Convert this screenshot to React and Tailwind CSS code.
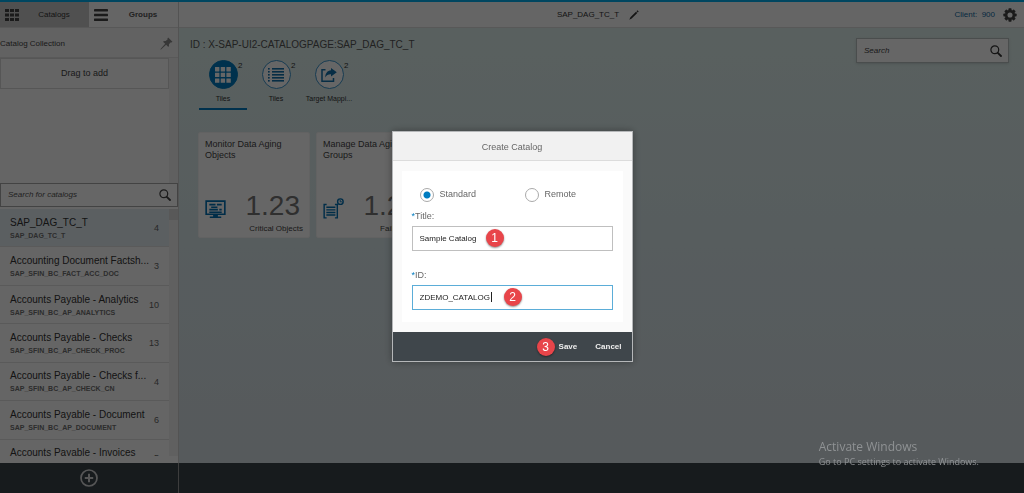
import { useState } from "react";

const catalogs = [
  { title: "SAP_DAG_TC_T", id: "SAP_DAG_TC_T", count: 4 },
  { title: "Accounting Document Factsh...", id: "SAP_SFIN_BC_FACT_ACC_DOC", count: 3 },
  { title: "Accounts Payable - Analytics", id: "SAP_SFIN_BC_AP_ANALYTICS", count: 10 },
  { title: "Accounts Payable - Checks", id: "SAP_SFIN_BC_AP_CHECK_PROC", count: 13 },
  { title: "Accounts Payable - Checks f...", id: "SAP_SFIN_BC_AP_CHECK_CN", count: 4 },
  { title: "Accounts Payable - Document", id: "SAP_SFIN_BC_AP_DOCUMENT", count: 6 },
  { title: "Accounts Payable - Invoices", id: "SAP_SFIN_BC_AP_INVOICES", count: 5 },
];

function GridIcon({ className }) {
  return (
    <svg viewBox="0 0 14 12" className={className} fill="currentColor" aria-hidden="true">
      {[0, 5, 10].map((x) =>
        [0, 4.5, 9].map((y) => <rect key={`${x}-${y}`} x={x} y={y} width="4" height="3" />)
      )}
    </svg>
  );
}

function TilesIcon({ className }) {
  return (
    <svg viewBox="0 0 16 16" className={className} fill="currentColor" aria-hidden="true">
      {[0, 5.7, 11.4].map((x) =>
        [0, 5.7, 11.4].map((y) => <rect key={`${x}-${y}`} x={x} y={y} width="4.400" height="4.400" rx=".3" />)
      )}
    </svg>
  );
}

function MenuIcon({ className }) {
  return (
    <svg viewBox="0 0 14 12" className={className} fill="currentColor" aria-hidden="true">
      <rect y="0" width="14" height="2.4" rx=".4" />
      <rect y="4.8" width="14" height="2.4" rx=".4" />
      <rect y="9.6" width="14" height="2.4" rx=".4" />
    </svg>
  );
}

function PinIcon({ className }) {
  return (
    <svg viewBox="0 0 14 14" className={className} fill="currentColor" aria-hidden="true">
      <path d="M8.800 .6 13.400 5.200 12.500 6 11.700 5.700 9.600 7.900C9.900 9 9.700 10 9 10.800L6.600 8.400 1.400 13.200 .4 13.600 .8 12.600 5.600 7.400 3.200 5C4 4.300 5 4.100 6.100 4.400L8.300 2.300 8 1.500Z" />
    </svg>
  );
}

function SearchIcon({ className }) {
  return (
    <svg viewBox="0 0 12 12" className={className} fill="none" stroke="currentColor" aria-hidden="true">
      <circle cx="4.800" cy="4.800" r="3.900" strokeWidth="1.200" />
      <path d="M7.800 7.800 11 11" strokeWidth="1.800" strokeLinecap="round" />
    </svg>
  );
}

function PencilIcon({ className }) {
  return (
    <svg viewBox="0 0 10 10" className={className} fill="currentColor" aria-hidden="true">
      <path d="M8.300 .3 9.700 1.600 8.800 2.500 7.500 1.200ZM7 1.700 8.300 3 2.700 8.500 .3 9.700 1.400 7.200Z" />
    </svg>
  );
}

function GearIcon({ className }) {
  return (
    <svg viewBox="0 0 16 16" className={className} aria-hidden="true">
      <g fill="currentColor">
        {[0, 45, 90, 135].map((a) => (
          <rect key={a} x="6.200" y="0.400" width="3.600" height="15.200" rx=".8" transform={`rotate(${a} 8 8)`} />
        ))}
      </g>
      <circle cx="8" cy="8" r="4.300" fill="none" stroke="currentColor" strokeWidth="3" />
      <circle cx="8" cy="8" r="2.900" fill="#fff" />
    </svg>
  );
}

function ListIcon({ className }) {
  return (
    <svg viewBox="0 0 16 14" className={className} fill="currentColor" aria-hidden="true">
      {[0, 3, 6, 9, 12].map((y) => (
        <g key={y}>
          <rect x="0" y={y} width="1.700" height="1.600" />
          <rect x="4" y={y} width="12" height="1.600" />
        </g>
      ))}
    </svg>
  );
}

function ShareIcon({ className }) {
  return (
    <svg viewBox="0 0 16 14" className={className} aria-hidden="true">
      <path d="M4.500 1.700H1V13.200H12.500V10" fill="none" stroke="currentColor" strokeWidth="1.500" />
      <path d="M10 0 15.800 4.300 10 8.600V6.300C7.400 6.200 5.500 7 4.200 9.500 4.400 5.300 6.300 2.600 10 2.300Z" fill="currentColor" />
    </svg>
  );
}

function MonitorIcon({ className }) {
  return (
    <svg viewBox="0 0 22 20" className={className} fill="currentColor" aria-hidden="true">
      <path d="M1.200 1.200H20.800V15H1.200Z" fill="none" stroke="currentColor" strokeWidth="1.700" />
      <path d="M4.500 4h6.500v1.700H4.500zM12.500 4H17.500v1.700h-5zM6.500 6.700h6.500v1.700H6.500zM4.500 9.300h9v1.700H4.500zM15 9.300H17.500v1.700h-2.500zM4.500 12h13v1.500H4.500zM8.500 15.500h5v2h-5zM5 17.200h12v1.700H5z" />
    </svg>
  );
}

function ScheduleIcon({ className }) {
  return (
    <svg viewBox="0 0 22 22" className={className} aria-hidden="true">
      <g fill="none" stroke="currentColor" strokeWidth="1.500">
        <path d="M3.800 6.800H1.200V20.800H3.800M12.500 6.800H15V20.800H12.500" />
        <circle cx="18.200" cy="3.800" r="2.900" />
        <path d="M18 2V4H19.800" strokeWidth="1" />
      </g>
      <path d="M3.500 9h9.500v1.500H3.500zM3.500 11.700h9.500v1.500H3.500zM3.500 14.400h9.500v1.500H3.500zM3.500 17.100h9.500v1.500H3.500z" fill="currentColor" />
    </svg>
  );
}

function PlusIcon({ className }) {
  return (
    <svg viewBox="0 0 18 18" className={className} fill="none" stroke="currentColor" aria-hidden="true">
      <circle cx="9" cy="9" r="8" strokeWidth="1.700" />
      <path d="M9 4.800V13.200M4.800 9H13.200" strokeWidth="2" />
    </svg>
  );
}

function Sidebar() {
  return (
    <aside className="flex w-[179px] shrink-0 flex-col border-r border-[#d0d0d0] bg-[#fcfcfc]">
      <nav className="flex h-[26px] shrink-0 border-b border-[#dcdcdc] text-[8px] font-bold text-[#555]">
        <button className="flex flex-1 items-center bg-[#c9c9c9] pl-[5px]">
          <GridIcon className="w-[14px] text-[#444]" />
          <span className="flex-1 font-normal text-[#333]">Catalogs</span>
        </button>
        <button className="flex flex-1 items-center pl-[5px]">
          <MenuIcon className="w-[14px] text-[#444]" />
          <span className="flex-1">Groups</span>
        </button>
      </nav>
      <div className="flex h-[30px] shrink-0 items-center justify-between border-b border-[#dedede] bg-[#f5f5f5] pt-[2px] pr-[5px]">
        <h2 className="text-[8px] text-[#444]">Catalog Collection</h2>
        <button aria-label="Pin panel">
          <PinIcon className="w-[13px] text-[#8a8a8a]" />
        </button>
      </div>
      <div className="flex min-h-0 flex-1 bg-[#f1f1f1]">
        <div className="w-[169px] bg-[#fcfcfc]">
          <button className="h-[31px] w-full border border-[#d6d6d6] text-[9px] text-[#444]">Drag to add</button>
        </div>
      </div>
      <label className="mb-[2px] flex h-6 shrink-0 items-center border border-[#a9a9a9] bg-white pr-[6px] pl-[7px]">
        <input
          type="text"
          aria-label="Search for catalogs"
          placeholder="Search for catalogs"
          className="min-w-0 flex-1 text-[8px] italic outline-none placeholder:text-[#555]"
        />
        <SearchIcon className="w-3 text-[#444]" />
      </label>
      <div className="mb-[7px] flex h-[247px] shrink-0 overflow-hidden">
        <ul className="flex h-[269px] w-[169px] flex-col">
          {catalogs.map((c, i) => (
            <li key={c.title} className="min-h-0 flex-1">
              <button
                className={`flex h-full w-full items-center border-b border-[#e0e0e0] px-[10px] pt-[2px] text-left ${
                  i === 0 ? "bg-[#e3edf3]" : ""
                }`}
              >
                <span className="flex-1 whitespace-nowrap">
                  <span className="block text-[10px] leading-[13px] text-[#333]">{c.title}</span>
                  <span className="block text-[7px] leading-[13px] font-bold text-[#707070]">{c.id}</span>
                </span>
                <span className="text-[9px] text-[#666]">{c.count}</span>
              </button>
            </li>
          ))}
        </ul>
        <div className="flex-1 bg-[#f1f1f1]">
          <div className="h-[11px] bg-[#dcdcdc]" />
        </div>
      </div>
    </aside>
  );
}

function TabFilter({ label, active, children }) {
  return (
    <button
      className={`flex h-[50px] w-12 flex-col items-center border-b-2 text-[7px] text-[#333] ${
        active ? "border-[#007cc0]" : "border-transparent"
      }`}
    >
      <span
        className={`relative flex size-[29px] items-center justify-center rounded-full border ${
          active ? "border-[#007cc0] bg-[#007cc0] text-white" : "border-[#3a94cc] bg-white text-[#1272ad]"
        }`}
      >
        {children}
        <span className="absolute -right-[6px] top-0 text-[8px] leading-[10px] text-[#333]">2</span>
      </span>
      <span className="mt-1 leading-[11px] whitespace-nowrap">{label}</span>
    </button>
  );
}

function Tile({ title, caption, children }) {
  return (
    <article className="flex h-[106px] w-[112px] flex-col justify-between rounded-[2px] border border-[#f4f4f4] bg-white px-[6px] pt-[6px] pb-px text-[#444]">
      <h3 className="pr-2 text-[9px] leading-[11px]">{title}</h3>
      <div>
        <div className="flex items-end justify-between pr-[3px]">
          {children}
          <span className="text-[28px] leading-[32px] text-[#777]">1.23</span>
        </div>
        <p className="text-right text-[8px] leading-[14px] text-[#444]">{caption}</p>
      </div>
    </article>
  );
}

function Main() {
  return (
    <main className="flex min-w-0 flex-1 flex-col">
      <header className="grid h-[26px] shrink-0 grid-cols-[1fr_auto_1fr] items-center border-b border-[#dcdcdc] bg-[#fcfcfc] pr-[7px]">
        <span />
        <div className="flex items-center gap-[10px]">
          <h1 className="text-[8px] text-[#333]">SAP_DAG_TC_T</h1>
          <button aria-label="Edit title">
            <PencilIcon className="w-[10px] text-[#333]" />
          </button>
        </div>
        <div className="flex items-center justify-end gap-2">
          <a href="#client" className="text-[8px] text-[#0f6aa3]">Client: &nbsp;900</a>
          <button aria-label="Settings">
            <GearIcon className="w-[14px] text-[#444]" />
          </button>
        </div>
      </header>
      <div className="flex flex-1 justify-between bg-linear-to-b from-[#dff0ed] via-[#d9e8ec] to-[#d8e0e5] pt-[10px] pr-[15px] pl-[11px]">
        <div>
          <h2 className="text-[10px] leading-[14px] text-[#555]">ID : X-SAP-UI2-CATALOGPAGE:SAP_DAG_TC_T</h2>
          <nav className="mt-2 flex gap-[5px] pl-[9px]">
            <TabFilter label="Tiles" active>
              <TilesIcon className="w-[16px]" />
            </TabFilter>
            <TabFilter label="Tiles">
              <ListIcon className="w-[16px]" />
            </TabFilter>
            <TabFilter label="Target Mappi...">
              <ShareIcon className="w-[16px]" />
            </TabFilter>
          </nav>
          <section className="mt-[22px] flex gap-[6px] pl-2">
            <Tile title="Monitor Data Aging Objects" caption="Critical Objects">
              <MonitorIcon className="mb-[3px] w-[21px] text-[#0070b4]" />
            </Tile>
            <Tile title="Manage Data Aging Groups" caption="Failed Jobs">
              <ScheduleIcon className="mb-[3px] w-[21px] text-[#0070b4]" />
            </Tile>
          </section>
        </div>
        <label className="flex h-[25px] w-[153px] items-center border border-[#b9c1c1] bg-white pr-[6px] pl-[7px] shadow">
          <input
            type="text"
            aria-label="Search"
            placeholder="Search"
            className="min-w-0 flex-1 text-[8px] italic outline-none placeholder:text-[#444]"
          />
          <SearchIcon className="w-3 text-[#333]" />
        </label>
      </div>
    </main>
  );
}

function Marker({ children, className = "" }) {
  return (
    <span
      className={`flex size-[18px] items-center justify-center rounded-full bg-[#e8454a] text-[12px] leading-none text-white shadow-[0_1px_2px_rgba(0,0,0,0.45)] ${className}`}
    >
      {children}
    </span>
  );
}

function Radio({ label, ...props }) {
  return (
    <label className="flex items-center gap-[6px]">
      <input
        type="radio"
        name="kind"
        className="size-[14px] appearance-none rounded-full border border-[#aaa] bg-white checked:bg-[radial-gradient(circle,#007cc0_3px,#fff_4px)]"
        {...props}
      />
      <span>{label}</span>
    </label>
  );
}

function FieldLabel({ htmlFor, children }) {
  return (
    <label htmlFor={htmlFor} className="flex leading-[12px]">
      <span aria-hidden="true" className="text-[#007cc0]">*</span>
      <span>{children}</span>
    </label>
  );
}

function CreateCatalogDialog() {
  const [kind, setKind] = useState("standard");
  const [title, setTitle] = useState("Sample Catalog");
  const [id, setId] = useState("ZDEMO_CATALOG");
  return (
    <form
      role="dialog"
      aria-labelledby="dialog-title"
      className="w-[241px] border border-[#b5b7b9] bg-[#fafafa] text-[9px] text-[#666] shadow-[0_0_8px_rgba(0,0,0,0.35)]"
    >
      <h2 id="dialog-title" className="flex h-[29px] items-center justify-center border-b border-[#dcdcdc] bg-[#f1f1f1] pt-[3px] text-[9px]">
        Create Catalog
      </h2>
      <div className="px-[9px] py-[10px]">
        <div className="bg-white px-[10px] pt-[17px] pb-3">
          <div className="grid grid-cols-[105px_1fr] pl-2">
            <Radio label="Standard" checked={kind === "standard"} onChange={() => setKind("standard")} />
            <Radio label="Remote" checked={kind === "remote"} onChange={() => setKind("remote")} />
          </div>
          <div className="mt-2">
            <FieldLabel htmlFor="catalog-title">Title:</FieldLabel>
          </div>
          <div className="relative mt-1">
            <input
              id="catalog-title"
              value={title}
              onChange={(e) => setTitle(e.target.value)}
              className="block h-[25px] w-full border border-[#bfbfbf] bg-white px-[7px] text-[8px] text-[#222] outline-none"
            />
            <Marker className="absolute top-[3px] left-[74px]">1</Marker>
          </div>
          <div className="mt-[18px]">
            <FieldLabel htmlFor="catalog-id">ID:</FieldLabel>
          </div>
          <div className="relative mt-1">
            <input
              id="catalog-id"
              value={id}
              onChange={(e) => setId(e.target.value)}
              className="block h-[25px] w-full border border-[#5badd8] bg-white px-[7px] text-[8px] text-[#222] outline-none"
            />
            <span className="absolute top-[7px] left-[79px] h-[10px] w-px bg-[#222]" />
            <Marker className="absolute top-[3px] left-[92px]">2</Marker>
          </div>
        </div>
      </div>
      <footer className="flex h-[29px] items-center justify-end bg-[#3f464b] pr-[10px] text-[8px] font-bold text-[#eee]">
        <Marker className="mr-1 font-normal">3</Marker>
        <button type="button" className="mr-[18px]">Save</button>
        <button type="button">Cancel</button>
      </footer>
    </form>
  );
}

export default function App() {
  return (
    <div className="relative flex h-screen flex-col overflow-hidden font-['Liberation_Sans',Arial,sans-serif]">
      <div className="h-[2px] shrink-0 bg-[#00b0f0]" />
      <div className="flex min-h-0 flex-1">
        <Sidebar />
        <Main />
      </div>
      <footer className="flex h-[30px] shrink-0 bg-[#3a444a]">
        <div className="flex w-[179px] items-center justify-center border-r border-[#9a9a9a]">
          <button aria-label="Add catalog">
            <PlusIcon className="w-[18px] text-[#d8d8d8]" />
          </button>
        </div>
      </footer>
      <div className="fixed inset-0 flex items-center justify-center bg-black/60">
        <CreateCatalogDialog />
      </div>
      <div className="pointer-events-none absolute right-[45px] bottom-[25px] font-['Open_Sans','Noto_Sans',sans-serif] text-[#8f9294]">
        <p className="text-[12px] leading-[16px]">Activate Windows</p>
        <p className="text-[9px] leading-[13px]">Go to PC settings to activate Windows.</p>
      </div>
    </div>
  );
}
